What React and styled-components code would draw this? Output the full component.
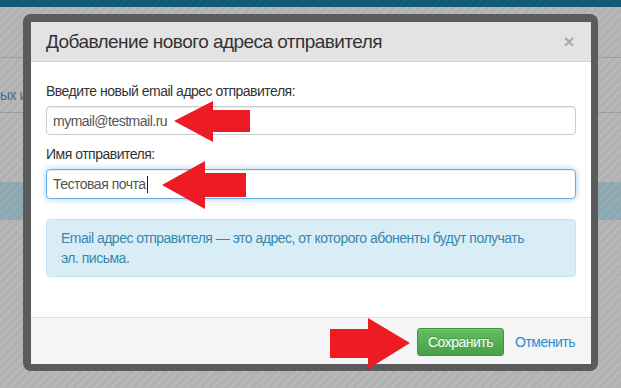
import React from "react";
import styled, { createGlobalStyle } from "styled-components";

const Global = createGlobalStyle`
  html, body { margin: 0; padding: 0; }
  body { font-family: "Liberation Sans", Arial, sans-serif; }
  * { box-sizing: border-box; }
`;

const stripes = (base, light) =>
  `repeating-linear-gradient(135deg, ${base} 0px, ${base} 4px, ${light} 4px, ${light} 6px)`;

const Page = styled.div`
  position: relative;
  width: 621px;
  height: 388px;
  overflow: hidden;
  background: ${stripes("#b2b2b2", "#b9b9b9")};
  display: flex;
  flex-direction: column;
`;

const TopBar = styled.div`
  height: 7px;
  background: ${stripes("#0f5877", "#135d7c")};
`;

const Row = styled.div`
  height: ${(p) => p.$h}px;
  border-bottom: ${(p) => (p.$line ? "1px solid #9d9d9d" : "none")};
  display: flex;
  align-items: center;
  padding-top: ${(p) => p.$pt || 0}px;
`;

const DimLink = styled.span`
  font-size: 14px;
  letter-spacing: -0.5px;
  color: #3c6e8c;
  white-space: nowrap;
`;

const Band = styled.div`
  height: 38px;
  background: ${stripes("#8ea8b2", "#94aeb8")};
`;

const Frame = styled.div`
  position: absolute;
  left: 23px;
  top: 14px;
  width: 575px;
  height: 357px;
  padding: 8px 7px 7px 8px;
  background: #5b5b5b;
  border-radius: 8px;
`;

const Modal = styled.div`
  height: 100%;
  background: #fff;
  display: flex;
  flex-direction: column;
  letter-spacing: -0.5px;
`;

const Header = styled.div`
  height: 40px;
  flex: none;
  background: #e3e3e3;
  border-bottom: 1px solid #d2d2d2;
  display: flex;
  align-items: center;
  justify-content: space-between;
  padding: 0 17px 0 15px;
`;

const Title = styled.h3`
  margin: 0;
  font-size: 19px;
  font-weight: normal;
  letter-spacing: -0.55px;
  color: #333;
`;

const Close = styled.span`
  font-size: 19px;
  font-weight: bold;
  color: #ababab;
  line-height: 1;
`;

const Body = styled.div`
  flex: 1;
  padding: 19px 15px 0 15px;
  display: flex;
  flex-direction: column;
`;

const Label = styled.div`
  font-size: 14px;
  line-height: 20px;
  color: #333;
  margin-top: ${(p) => p.$mt || 0}px;
`;

const Field = styled.div`
  margin-top: 5px;
  height: ${(p) => p.$h}px;
  border: 1px solid ${(p) => (p.$focus ? "#66afe9" : "#cccccc")};
  border-radius: 4px;
  padding: 0 6px;
  display: flex;
  align-items: center;
  font-size: 14px;
  color: #555;
  box-shadow: ${(p) =>
    p.$focus
      ? "inset 0 1px 1px rgba(0,0,0,.075), 0 0 6px rgba(102,175,233,.6)"
      : "inset 0 1px 1px rgba(0,0,0,.075)"};
`;

const Caret = styled.span`
  display: inline-block;
  width: 1px;
  height: 17px;
  background: #222;
  margin-left: 1px;
`;

const Alert = styled.div`
  margin-top: 20px;
  background: #d9edf7;
  border: 1px solid #bce8f1;
  border-radius: 4px;
  padding: 8px 42px 8px 14px;
  font-size: 14px;
  line-height: 20px;
  color: #3a87ad;
`;

const Footer = styled.div`
  height: 47px;
  flex: none;
  background: #f5f5f5;
  border-top: 1px solid #dddddd;
  display: flex;
  align-items: flex-start;
  justify-content: flex-end;
  gap: 11px;
  padding: 10px 16px 0 15px;
`;

const SaveButton = styled.button`
  height: 28px;
  padding: 0 10px;
  font-family: inherit;
  font-size: 14px;
  letter-spacing: -0.5px;
  color: #fff;
  text-shadow: 0 -1px 0 rgba(0, 0, 0, 0.2);
  background: linear-gradient(#62bf62, #47a047);
  border: 1px solid #3f923f;
  border-radius: 3px;
  box-shadow: inset 0 1px 0 rgba(255, 255, 255, 0.15);
`;

const CancelLink = styled.a`
  font-size: 14px;
  line-height: 28px;
  color: #2a8bd2;
  text-decoration: none;
`;

const Annotations = styled.svg`
  position: absolute;
  left: 0;
  top: 0;
  pointer-events: none;
`;

const RED = "#ed1c24";

export default function App() {
  return (
    <>
      <Global />
      <Page>
        <TopBar />
        <Row $h={51} $line />
        <Row $h={55} $line $pt={20}>
          <DimLink>ых им</DimLink>
        </Row>
        <Row $h={69} />
        <Band />

        <Frame>
          <Modal>
            <Header>
              <Title>Добавление нового адреса отправителя</Title>
              <Close>×</Close>
            </Header>
            <Body>
              <Label>Введите новый email адрес отправителя:</Label>
              <Field $h={29}>mymail@testmail.ru</Field>
              <Label $mt={9}>Имя отправителя:</Label>
              <Field $h={30} $focus>
                Тестовая почта
                <Caret />
              </Field>
              <Alert>
                Email адрес отправителя — это адрес, от которого абоненты будут получать эл. письма.
              </Alert>
            </Body>
            <Footer>
              <SaveButton>Сохранить</SaveButton>
              <CancelLink href="#">Отменить</CancelLink>
            </Footer>
          </Modal>
        </Frame>

        <Annotations width="621" height="388" viewBox="0 0 621 388">
          <polygon
            fill={RED}
            points="174,121 213,101 213,110 250,110 250,132 213,132 213,142"
          />
          <polygon
            fill={RED}
            points="162,185 205,161 205,173 246,173 246,197 205,197 205,209"
          />
          <polygon
            fill={RED}
            points="410,343 368,318 368,329 330,329 330,358 368,358 368,369"
          />
        </Annotations>
      </Page>
    </>
  );
}
